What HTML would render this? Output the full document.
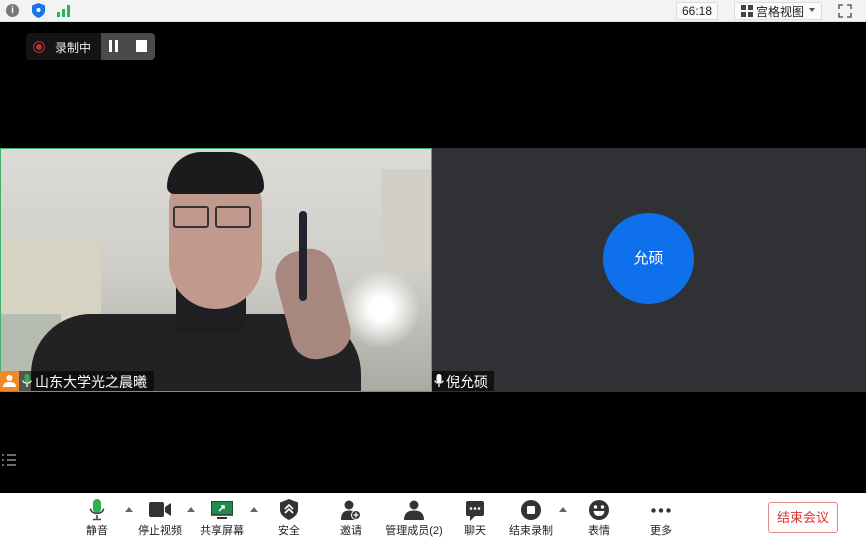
<!DOCTYPE html>
<html><head><meta charset="utf-8"><style>
*{margin:0;padding:0;box-sizing:border-box}
body{width:866px;height:542px;background:#000;position:relative;overflow:hidden;font-family:"Liberation Sans","Noto Sans CJK SC",sans-serif}
.abs{position:absolute}
.top{left:0;top:0;width:866px;height:22px;background:#f3f3f3;border-bottom:1px solid #ddd}
.bar{left:0;top:493px;width:866px;height:49px;background:#fff}
.lbl{position:absolute;top:29px;font-size:11px;color:#222;transform:translateX(-50%);white-space:nowrap}
.ic{position:absolute;top:6px;transform:translateX(-50%)}
.tri{position:absolute;top:14px;width:0;height:0;border-left:4px solid transparent;border-right:4px solid transparent;border-bottom:5px solid #666}
</style></head><body>
<div class="abs top">
 <div class="abs" style="left:6px;top:4px;width:13px;height:13px;border-radius:50%;background:#777;color:#fff;font-size:10px;text-align:center;line-height:13px;font-weight:bold">i</div>
 <svg class="abs" style="left:32px;top:3px" width="13" height="15"><path d="M6.5 0L13 2.5V8C13 11 10 13.5 6.5 15C3 13.5 0 11 0 8V2.5Z" fill="#1a73e8"/><circle cx="6.5" cy="7" r="2" fill="#fff"/></svg>
 <svg class="abs" style="left:57px;top:5px" width="13" height="12"><rect x="0" y="7" width="3" height="5" fill="#2db34a"/><rect x="5" y="4" width="3" height="8" fill="#2db34a"/><rect x="10" y="0" width="3" height="12" fill="#2db34a"/></svg>
 <div class="abs" style="left:676px;top:2px;width:42px;height:18px;border:1px solid #ddd;background:#fafafa;font-size:12px;text-align:center;line-height:16px;color:#222">66:18</div>
 <div class="abs" style="left:734px;top:2px;width:88px;height:18px;border:1px solid #ddd;background:#fafafa"></div>
 <svg class="abs" style="left:741px;top:5px" width="12" height="12"><rect x="0" y="0" width="5" height="5" fill="#444"/><rect x="7" y="0" width="5" height="5" fill="#444"/><rect x="0" y="7" width="5" height="5" fill="#444"/><rect x="7" y="7" width="5" height="5" fill="#444"/></svg>
 <div class="abs" style="left:756px;top:3px;font-size:12px;color:#222">宫格视图</div>
 <div class="abs" style="left:809px;top:8px;border-left:3px solid transparent;border-right:3px solid transparent;border-top:4px solid #555"></div>
 <svg class="abs" style="left:838px;top:4px" width="14" height="14" fill="none" stroke="#444" stroke-width="1.3"><path d="M1 5V1H5M9 1H13V5M13 9V13H9M5 13H1V9"/></svg>
</div>
<div class="abs" style="left:26px;top:33px;width:75px;height:27px;background:#141414;border-radius:4px 0 0 4px"></div>
<div class="abs" style="left:101px;top:33px;width:54px;height:27px;background:#4a4a4a;border-radius:0 4px 4px 0"></div>
<div class="abs" style="left:33px;top:41px;width:12px;height:12px;border-radius:50%;border:1.5px solid #a33;background:#c0302b;box-shadow:inset 0 0 0 2px #141414"></div>
<div class="abs" style="left:55px;top:39px;font-size:12px;color:#eee">录制中</div>
<div class="abs" style="left:109px;top:40px;width:3px;height:12px;background:#fff"></div>
<div class="abs" style="left:115px;top:40px;width:3px;height:12px;background:#fff"></div>
<div class="abs" style="left:136px;top:40px;width:11px;height:12px;background:#fff"></div>

<div class="abs" style="left:0;top:148px;width:432px;height:244px;overflow:hidden;border:1px solid #3bb36a;background:linear-gradient(180deg,#dcdbd7 0%,#d0cec9 50%,#aaa9a2 100%)">
 <div class="abs" style="left:0;top:90px;width:100px;height:120px;background:#d6d3c3"></div>
 <div class="abs" style="left:0;top:165px;width:60px;height:80px;background:#b7bcb1"></div>
 <div class="abs" style="left:380px;top:20px;width:50px;height:100px;background:#d2d0c6"></div>
 <div class="abs" style="left:340px;top:120px;width:80px;height:80px;border-radius:50%;background:radial-gradient(#fff 20%,rgba(255,255,255,0) 70%)"></div>
 <div class="abs" style="left:30px;top:165px;width:330px;height:120px;border-radius:60px 60px 0 0;background:#222224"></div>
 <div class="abs" style="left:175px;top:125px;width:70px;height:60px;background:#1f1f22"></div>
 <div class="abs" style="left:168px;top:15px;width:93px;height:145px;border-radius:45px 45px 50px 50px;background:#c09a8c"></div>
 <div class="abs" style="left:166px;top:3px;width:97px;height:42px;border-radius:48px 48px 10px 10px;background:#1b1a1d"></div>
 <div class="abs" style="left:172px;top:57px;width:36px;height:22px;border:2px solid #333;border-radius:3px"></div>
 <div class="abs" style="left:214px;top:57px;width:36px;height:22px;border:2px solid #333;border-radius:3px"></div>
 <div class="abs" style="left:282px;top:100px;width:60px;height:110px;border-radius:25px;background:#a8887e;transform:rotate(-15deg)"></div>
 <div class="abs" style="left:298px;top:62px;width:8px;height:90px;border-radius:4px;background:#22232e"></div>
</div>
<div class="abs" style="left:0;top:371px;width:19px;height:20px;background:#f08a24"></div>
<svg class="abs" style="left:3px;top:374px" width="13" height="13"><circle cx="6.5" cy="4" r="3" fill="#fff"/><path d="M0 13C0 9 3 8 6.5 8S13 9 13 13Z" fill="#fff"/></svg>
<div class="abs" style="left:19px;top:371px;width:135px;height:20px;background:rgba(0,0,0,.55)"></div>
<svg class="abs" style="left:22px;top:374px" width="10" height="14"><rect x="2.5" y="0" width="5" height="9" rx="2.5" fill="#2db34a"/><path d="M1 6.5C1 10 9 10 9 6.5M5 10V13" stroke="#fff" stroke-width="1.3" fill="none"/></svg>
<div class="abs" style="left:35px;top:372px;font-size:14px;color:#fff">山东大学光之晨曦</div>

<div class="abs" style="left:432px;top:148px;width:434px;height:244px;background:#2f3134"></div>
<div class="abs" style="left:603px;top:213px;width:91px;height:91px;border-radius:50%;background:#0e71eb;color:#fff;font-size:15px;text-align:center;line-height:91px">允硕</div>
<div class="abs" style="left:432px;top:371px;width:62px;height:20px;background:#111"></div>
<svg class="abs" style="left:434px;top:374px" width="10" height="14"><rect x="2.5" y="0" width="5" height="9" rx="2.5" fill="#fff"/><path d="M1 6.5C1 10 9 10 9 6.5M5 10V13" stroke="#fff" stroke-width="1.3" fill="none"/></svg>
<div class="abs" style="left:446px;top:372px;font-size:14px;color:#fff">倪允硕</div>

<svg class="abs" style="left:2px;top:454px" width="14" height="13" stroke="#aaa" stroke-width="1.2"><path d="M0 1H2M0 6H2M0 11H2M5 1H14M5 6H14M5 11H14"/></svg>

<div class="abs bar">
 <svg class="ic" style="left:97px" width="16" height="22"><rect x="4" y="0" width="8" height="14" rx="4" fill="#2db34a"/><path d="M1.5 9.5C1.5 16 14.5 16 14.5 9.5M8 16V20M4 20.5H12" stroke="#444" stroke-width="1.6" fill="none"/></svg>
 <div class="lbl" style="left:97px">静音</div>
 <div class="tri" style="left:125px"></div>
 <svg class="ic" style="left:160px;top:9px" width="22" height="15"><rect x="0" y="0" width="15" height="15" rx="2" fill="#333"/><path d="M16 5L22 1V14L16 10Z" fill="#333"/></svg>
 <div class="lbl" style="left:160px">停止视频</div>
 <div class="tri" style="left:187px"></div>
 <svg class="ic" style="left:222px;top:8px" width="22" height="18"><rect x="0" y="0" width="22" height="14" fill="#1f8a4c"/><rect x="0" y="0" width="22" height="14" fill="none" stroke="#333" stroke-width="1.5"/><path d="M8 10L13 5M10 5H13V8" stroke="#fff" stroke-width="1.5" fill="none"/><rect x="6" y="16" width="10" height="2" fill="#333"/></svg>
 <div class="lbl" style="left:222px">共享屏幕</div>
 <div class="tri" style="left:250px"></div>
 <svg class="ic" style="left:289px;top:6px" width="18" height="21"><path d="M9 0L18 3.5V11C18 16 13 19 9 21C5 19 0 16 0 11V3.5Z" fill="#333"/><path d="M5 10L9 6L13 10M5 14L9 10L13 14" stroke="#fff" stroke-width="1.6" fill="none"/></svg>
 <div class="lbl" style="left:289px">安全</div>
 <svg class="ic" style="left:351px;top:7px" width="20" height="20"><circle cx="8" cy="5" r="4.5" fill="#333"/><path d="M0 20C0 13 3 10.5 8 10.5S13 12 14 13V20Z" fill="#333"/><circle cx="15" cy="15" r="4.5" fill="#333" stroke="#fff" stroke-width="1"/><path d="M15 12.5V17.5M12.5 15H17.5" stroke="#fff" stroke-width="1.3"/></svg>
 <div class="lbl" style="left:351px">邀请</div>
 <svg class="ic" style="left:414px;top:7px" width="20" height="20"><circle cx="10" cy="5" r="4.5" fill="#333"/><path d="M0 20C0 13 4 10.5 10 10.5S20 13 20 20Z" fill="#333"/></svg>
 <div class="lbl" style="left:414px">管理成员(2)</div>
 <svg class="ic" style="left:475px;top:8px" width="18" height="20"><path d="M2 0H16Q18 0 18 2V13Q18 15 16 15H9L4 20V15H2Q0 15 0 13V2Q0 0 2 0Z" fill="#333"/><circle cx="5" cy="7.5" r="1.3" fill="#fff"/><circle cx="9" cy="7.5" r="1.3" fill="#fff"/><circle cx="13" cy="7.5" r="1.3" fill="#fff"/></svg>
 <div class="lbl" style="left:475px">聊天</div>
 <svg class="ic" style="left:531px;top:7px" width="20" height="20"><circle cx="10" cy="10" r="10" fill="#333"/><rect x="6" y="6" width="8" height="8" rx="1" fill="#fff"/></svg>
 <div class="lbl" style="left:531px">结束录制</div>
 <div class="tri" style="left:559px"></div>
 <svg class="ic" style="left:599px;top:7px" width="20" height="20"><circle cx="10" cy="10" r="10" fill="#333"/><circle cx="6.5" cy="7" r="1.7" fill="#fff"/><circle cx="13.5" cy="7" r="1.7" fill="#fff"/><path d="M4.5 11H15.5Q15 16 10 16Q5 16 4.5 11Z" fill="#fff"/></svg>
 <div class="lbl" style="left:599px">表情</div>
 <svg class="ic" style="left:661px;top:15px" width="20" height="5"><circle cx="2.5" cy="2.5" r="2.2" fill="#333"/><circle cx="10" cy="2.5" r="2.2" fill="#333"/><circle cx="17.5" cy="2.5" r="2.2" fill="#333"/></svg>
 <div class="lbl" style="left:661px">更多</div>
 <div class="abs" style="left:768px;top:9px;width:70px;height:31px;border:1px solid #e08a8a;border-radius:3px;color:#d33;font-size:13px;text-align:center;line-height:29px">结束会议</div>
</div>
</body></html>
